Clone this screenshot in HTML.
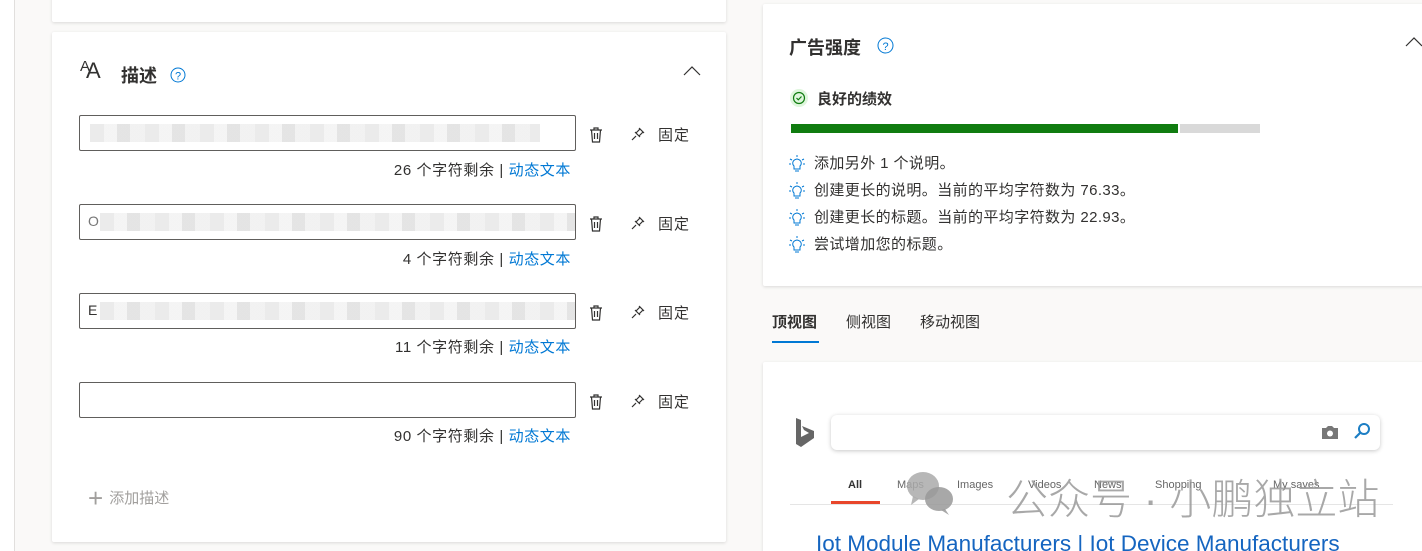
<!DOCTYPE html>
<html><head><meta charset="utf-8"><style>
*{box-sizing:border-box;margin:0;padding:0}
html,body{width:1422px;height:551px;overflow:hidden}
body{background:#faf9f8;font-family:"Liberation Sans","Noto Sans CJK SC",sans-serif;color:#323130;position:relative}
.abs{position:absolute}
.card{position:absolute;background:#fff;border-radius:2px;box-shadow:0 1px 3px rgba(0,0,0,.13)}
.inp{position:absolute;left:79px;width:497px;height:36px;border:1px solid #605e5c;border-radius:2px;background:#fff;overflow:hidden}
.blur{position:absolute;left:10px;top:8px;height:18px;background:repeating-linear-gradient(90deg,#e6e6e6 0 14px,#f2f2f2 14px 27px,#dedede 27px 40px,#eeeeee 40px 55px);opacity:.8}
.cnt{position:absolute;right:851px;font-size:15px;letter-spacing:.6px;color:#323130;white-space:nowrap}
.cnt a{color:#0078d4;text-decoration:none}
.act{position:absolute;left:588px;font-size:15px;white-space:nowrap;letter-spacing:1px}
.tip{font-size:15px;letter-spacing:.4px;height:27px;line-height:27px;display:flex;align-items:center}
.tip svg{margin-right:9px}
</style></head><body>
<div class="abs" style="left:0;top:0;width:15px;height:551px;background:#fff;border-right:1px solid #e1dfdd"></div>
<div class="card" style="left:52px;top:-5px;width:674px;height:27px"></div>
<div class="card" style="left:52px;top:32px;width:674px;height:510px"></div>

<div class="abs" style="left:80px;top:58px;font-size:22px;letter-spacing:-4px;font-weight:300"><span style="font-size:15px;vertical-align:7px">A</span>A</div>
<div class="abs" style="left:121px;top:62px;font-size:18px;font-weight:bold">描述</div>
<svg class="abs" style="left:170px;top:67px" width="16" height="16"><circle cx="8" cy="8" r="7" fill="none" stroke="#0078d4"/><text x="8" y="12.5" font-size="11" text-anchor="middle" fill="#0078d4" font-family="Liberation Sans">?</text></svg>
<svg class="abs" style="left:683px;top:66px" width="18" height="10"><path d="M1 9L9 1L17 9" fill="none" stroke="#323130" stroke-width="1.2"/></svg>

<div class="inp" style="top:115px"><div class="blur" style="width:450px"></div></div>
<div class="inp" style="top:204px"><span style="position:absolute;left:8px;top:8px;font-size:14px;color:#777">O</span><div class="blur" style="left:20px;width:476px"></div></div>
<div class="inp" style="top:293px"><span style="position:absolute;left:8px;top:8px;font-size:14px">E</span><div class="blur" style="left:20px;width:476px"></div></div>
<div class="inp" style="top:382px"></div>

<div class="cnt" style="top:159px">26 个字符剩余 | <a>动态文本</a></div>
<div class="cnt" style="top:248px">4 个字符剩余 | <a>动态文本</a></div>
<div class="cnt" style="top:336px">11 个字符剩余 | <a>动态文本</a></div>
<div class="cnt" style="top:425px">90 个字符剩余 | <a>动态文本</a></div>

<div class="act" style="top:124px"><svg width="16" height="18" style="vertical-align:-4px"><path d="M2 4H14M6 4V2H10V4M3.5 4L4.5 16H11.5L12.5 4M6.5 7V13M9.5 7V13" fill="none" stroke="#323130" stroke-width="1.2"/></svg><svg width="16" height="16" style="margin-left:26px;vertical-align:-2px"><path d="M2 14L6 10M5 6L10 11M6 7L10 3L13 6L9 10M10 3L9 2M13 6L14 7" fill="none" stroke="#323130" stroke-width="1.2"/></svg><span style="margin-left:12px">固定</span></div>
<div class="act" style="top:213px"><svg width="16" height="18" style="vertical-align:-4px"><path d="M2 4H14M6 4V2H10V4M3.5 4L4.5 16H11.5L12.5 4M6.5 7V13M9.5 7V13" fill="none" stroke="#323130" stroke-width="1.2"/></svg><svg width="16" height="16" style="margin-left:26px;vertical-align:-2px"><path d="M2 14L6 10M5 6L10 11M6 7L10 3L13 6L9 10M10 3L9 2M13 6L14 7" fill="none" stroke="#323130" stroke-width="1.2"/></svg><span style="margin-left:12px">固定</span></div>
<div class="act" style="top:302px"><svg width="16" height="18" style="vertical-align:-4px"><path d="M2 4H14M6 4V2H10V4M3.5 4L4.5 16H11.5L12.5 4M6.5 7V13M9.5 7V13" fill="none" stroke="#323130" stroke-width="1.2"/></svg><svg width="16" height="16" style="margin-left:26px;vertical-align:-2px"><path d="M2 14L6 10M5 6L10 11M6 7L10 3L13 6L9 10M10 3L9 2M13 6L14 7" fill="none" stroke="#323130" stroke-width="1.2"/></svg><span style="margin-left:12px">固定</span></div>
<div class="act" style="top:391px"><svg width="16" height="18" style="vertical-align:-4px"><path d="M2 4H14M6 4V2H10V4M3.5 4L4.5 16H11.5L12.5 4M6.5 7V13M9.5 7V13" fill="none" stroke="#323130" stroke-width="1.2"/></svg><svg width="16" height="16" style="margin-left:26px;vertical-align:-2px"><path d="M2 14L6 10M5 6L10 11M6 7L10 3L13 6L9 10M10 3L9 2M13 6L14 7" fill="none" stroke="#323130" stroke-width="1.2"/></svg><span style="margin-left:12px">固定</span></div>

<div class="abs" style="left:88px;top:483px;font-size:15px;color:#a19f9d;white-space:nowrap"><span style="font-size:26px;font-weight:300;vertical-align:-4px;margin-right:6px">+</span>添加描述</div>

<!-- right -->
<div class="card" style="left:763px;top:4px;width:670px;height:282px"></div>
<div class="abs" style="left:789px;top:34px;font-size:18px;font-weight:bold">广告强度</div>
<svg class="abs" style="left:877px;top:37px" width="17" height="17"><circle cx="8.5" cy="8.5" r="7.5" fill="none" stroke="#0078d4"/><text x="8.5" y="13" font-size="11" text-anchor="middle" fill="#0078d4" font-family="Liberation Sans">?</text></svg>
<svg class="abs" style="left:1405px;top:37px" width="17" height="10"><path d="M1 9L9 1L17 9" fill="none" stroke="#323130" stroke-width="1.2"/></svg>
<svg class="abs" style="left:790px;top:89px" width="18" height="18"><circle cx="9" cy="9" r="9" fill="#dff6dd"/><circle cx="9" cy="9" r="5.5" fill="none" stroke="#107c10" stroke-width="1.2"/><path d="M6.5 9L8.3 10.8L11.5 7.5" fill="none" stroke="#107c10" stroke-width="1.2"/></svg>
<div class="abs" style="left:817px;top:88px;font-size:15px;font-weight:bold">良好的绩效</div>
<div class="abs" style="left:791px;top:124px;width:387px;height:9px;background:#107c10"></div>
<div class="abs" style="left:1180px;top:124px;width:80px;height:9px;background:#d9d9d9"></div>
<div class="abs" style="left:789px;top:150px">
<div class="tip"><svg width="16" height="18"><path d="M5 11C3 9 3 5 8 4C13 5 13 9 11 11V14H5Z M6 16H10" fill="none" stroke="#0078d4"/><path d="M8 0V2M1 4L3 5M15 4L13 5M0 9H2M16 9H14" stroke="#0078d4"/></svg>添加另外 1 个说明。</div>
<div class="tip"><svg width="16" height="18"><path d="M5 11C3 9 3 5 8 4C13 5 13 9 11 11V14H5Z M6 16H10" fill="none" stroke="#0078d4"/><path d="M8 0V2M1 4L3 5M15 4L13 5M0 9H2M16 9H14" stroke="#0078d4"/></svg>创建更长的说明。当前的平均字符数为 76.33。</div>
<div class="tip"><svg width="16" height="18"><path d="M5 11C3 9 3 5 8 4C13 5 13 9 11 11V14H5Z M6 16H10" fill="none" stroke="#0078d4"/><path d="M8 0V2M1 4L3 5M15 4L13 5M0 9H2M16 9H14" stroke="#0078d4"/></svg>创建更长的标题。当前的平均字符数为 22.93。</div>
<div class="tip"><svg width="16" height="18"><path d="M5 11C3 9 3 5 8 4C13 5 13 9 11 11V14H5Z M6 16H10" fill="none" stroke="#0078d4"/><path d="M8 0V2M1 4L3 5M15 4L13 5M0 9H2M16 9H14" stroke="#0078d4"/></svg>尝试增加您的标题。</div>
</div>

<div class="abs" style="left:772px;top:311px;font-size:15px;font-weight:bold">顶视图</div>
<div class="abs" style="left:772px;top:341px;width:47px;height:2px;background:#0078d4"></div>
<div class="abs" style="left:846px;top:311px;font-size:15px">侧视图</div>
<div class="abs" style="left:920px;top:311px;font-size:15px">移动视图</div>

<div class="card" style="left:763px;top:362px;width:670px;height:200px"></div>
<svg class="abs" style="left:795px;top:418px" width="24" height="30"><path d="M1 0L6 2V19L14 15L9 12L7 8L19 13V20L6 29L1 26Z" fill="#666"/></svg>
<div class="abs" style="left:831px;top:415px;width:549px;height:35px;border-radius:6px;box-shadow:0 1px 4px rgba(0,0,0,.22);background:#fff"></div>
<svg class="abs" style="left:1320px;top:424px" width="20" height="16"><path d="M2 4H6L8 2H12L14 4H18V15H2Z" fill="#777"/><circle cx="10" cy="9.5" r="3" fill="#fff"/></svg>
<svg class="abs" style="left:1352px;top:421px" width="20" height="20"><circle cx="12" cy="8" r="5" fill="none" stroke="#1c7ec4" stroke-width="2"/><path d="M8.5 11.5L3 17" stroke="#1c7ec4" stroke-width="2.2"/></svg>
<div class="abs" style="left:848px;top:479px;font-size:11px;font-weight:bold;color:#333">All</div>
<div class="abs" style="left:831px;top:501px;width:49px;height:3px;background:#e8462b"></div>
<div class="abs" style="left:897px;top:479px;font-size:11px;color:#666">Maps</div>
<div class="abs" style="left:957px;top:479px;font-size:11px;color:#666">Images</div>
<div class="abs" style="left:1028px;top:479px;font-size:11px;color:#666">Videos</div>
<div class="abs" style="left:1094px;top:479px;font-size:11px;color:#666">News</div>
<div class="abs" style="left:1155px;top:479px;font-size:11px;color:#666">Shopping</div>
<div class="abs" style="left:1273px;top:479px;font-size:11px;color:#666">My saves</div>
<div class="abs" style="left:790px;top:504px;width:603px;height:1px;background:#e5e5e5"></div>
<svg class="abs" style="left:905px;top:469px" width="50" height="48"><ellipse cx="18" cy="17" rx="16" ry="14" fill="#aaa" opacity=".85"/><path d="M8 27L6 36L14 30Z" fill="#aaa" opacity=".85"/><ellipse cx="34" cy="30" rx="14" ry="12" fill="#999" opacity=".85"/><path d="M40 40L44 46L36 41Z" fill="#999" opacity=".85"/></svg>
<div class="abs" style="left:1006px;top:466px;font-size:42px;color:#999;opacity:.85;font-weight:300;white-space:nowrap">公众号 · 小鹏独立站</div>
<div class="abs" style="left:816px;top:531px;font-size:22.5px;color:#1565c0;white-space:nowrap">Iot Module Manufacturers | Iot Device Manufacturers</div>
</body></html>
